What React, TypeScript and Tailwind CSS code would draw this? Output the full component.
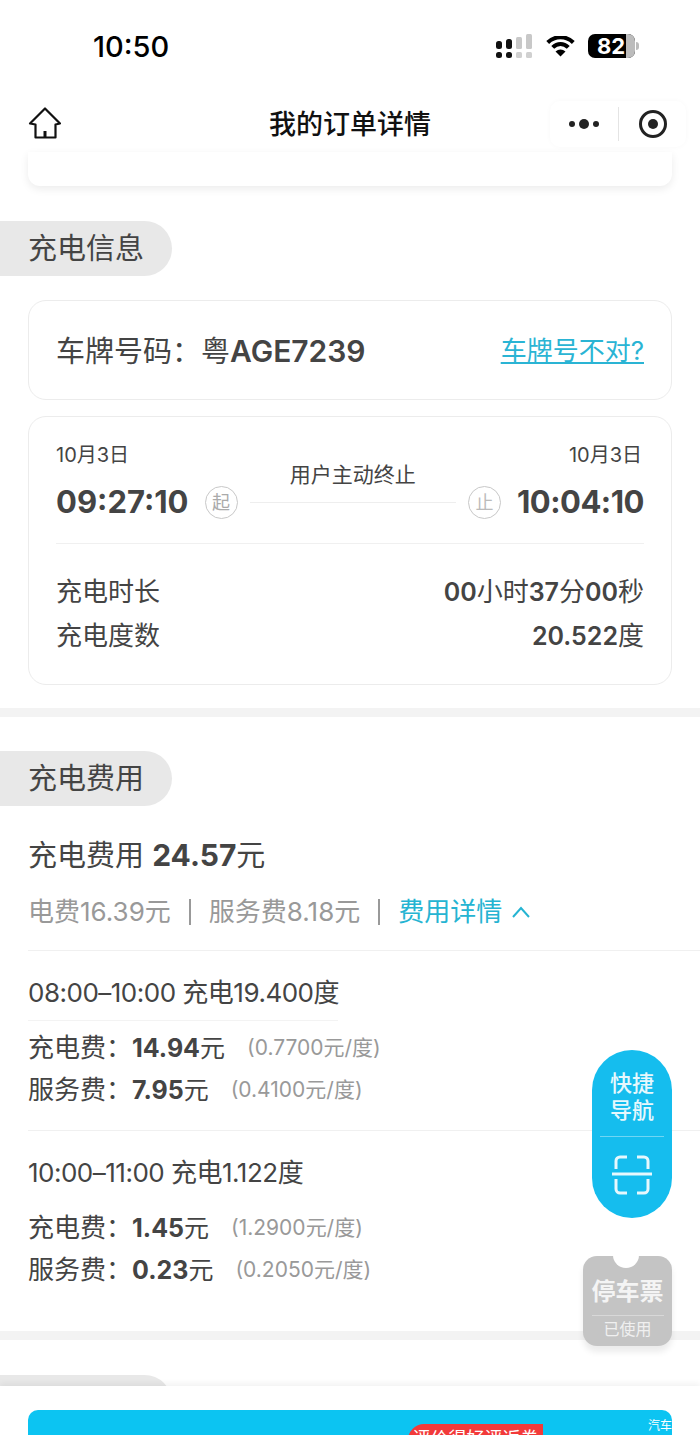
const FONT = '[font-family:Inter,"Noto_Sans_CJK_SC",sans-serif]';

function StatusBar() {
  return (
    <div className="flex h-[94px] items-start justify-between pl-[93px] pr-[61px] pt-[29px]">
      <span className="text-[29px] leading-[36px] font-medium text-black">10:50</span>
      <div className="mt-[5px] flex items-center">
        <svg width="36" height="24" viewBox="0 0 36 24">
          <rect x="0" y="7" width="6" height="8" rx="2.5" fill="#111" />
          <rect x="10" y="5" width="6" height="10" rx="2.5" fill="#111" />
          <rect x="20" y="3" width="6" height="12" rx="1.5" fill="#c8c8c8" />
          <rect x="30" y="0" width="6" height="15" rx="1.5" fill="#c8c8c8" />
          <rect x="0" y="18" width="6" height="6" rx="2.5" fill="#111" />
          <rect x="10" y="18" width="6" height="6" rx="2.5" fill="#111" />
          <rect x="20" y="18" width="6" height="6" rx="1.5" fill="#d0d0d0" />
          <rect x="30" y="18" width="6" height="6" rx="1.5" fill="#d0d0d0" />
        </svg>
        <svg width="31" height="21" viewBox="1 3 30 23" className="ml-[13px]">
          <path d="M2 10C10 2.500 22 2.500 30 10" fill="none" stroke="#000" strokeWidth="4.500" />
          <path d="M7.500 15.500C12.500 10.500 19.500 10.500 24.500 15.500" fill="none" stroke="#000" strokeWidth="4.500" />
          <path d="M16 25.500L10.500 20C14 17 18 17 21.500 20Z" fill="#000" />
        </svg>
        <div className="ml-[12px] flex items-center">
          <div className="relative flex h-[24px] w-[47px] items-center overflow-hidden rounded-[7px] bg-black pl-[9px]">
            <span className="text-[22px] leading-[24px] font-bold text-white">82</span>
            <div className="absolute inset-y-0 right-0 w-[9px] bg-[#bcbcbc]" />
          </div>
          <div className="ml-[1px] h-[8px] w-[3px] rounded-r-full bg-[#bcbcbc]" />
        </div>
      </div>
    </div>
  );
}

function NavBar() {
  return (
    <div className="relative flex h-[58px] items-center justify-center">
      <svg width="34" height="34" viewBox="0 0 34 34" className="absolute left-[28px] top-[12px]">
        <path
          d="M17 2.500L2 17.500L7.500 18.500V31.500H27.500V18.500L32 17.500Z"
          fill="none"
          stroke="#111"
          strokeWidth="2.200"
          strokeLinejoin="round"
        />
        <path d="M17 25V31" stroke="#111" strokeWidth="3" />
      </svg>
      <span className="mt-[4px] text-[27px] leading-[36px] font-medium text-[#111]">我的订单详情</span>
      <div className="absolute right-[14px] top-[7px] flex h-[46px] w-[136px] items-center rounded-[10px] shadow-[0_0_5px_rgba(0,0,0,0.03)]">
        <div className="flex w-[68px] items-center justify-center gap-[4px]">
          <span className="h-[6px] w-[6px] rounded-full bg-[#222]" />
          <span className="h-[10px] w-[10px] rounded-full bg-[#222]" />
          <span className="h-[6px] w-[6px] rounded-full bg-[#222]" />
        </div>
        <div className="h-[34px] w-px bg-[#e4e4e4]" />
        <div className="flex flex-1 items-center justify-center">
          <div className="flex h-[28px] w-[28px] items-center justify-center rounded-full border-[3px] border-[#222]">
            <span className="h-[10px] w-[10px] rounded-full bg-[#222]" />
          </div>
        </div>
      </div>
    </div>
  );
}

function SectionPill({ label }: { label: string }) {
  return (
    <div className="flex h-[55px] w-[172px] items-center rounded-r-full bg-[#e8e8e8] pl-[28px]">
      <span className="text-[29px] leading-[36px] text-[#444]">{label}</span>
    </div>
  );
}

function TimeCard() {
  return (
    <div className="mx-[28px] mt-[16px] h-[269px] rounded-[18px] border border-[#ececec] px-[27px] pt-[24px]">
      <div className="flex justify-between text-[20px] leading-[28px] text-[#444]">
        <span>10月3日</span>
        <span className="mr-[2px]">10月3日</span>
      </div>
      <div className="relative mt-[13px] flex h-[40px] items-center">
        <span className="text-[31px] leading-[40px] font-bold text-[#444]">09:27:10</span>
        <span className="ml-[16px] flex h-[33px] w-[33px] items-center justify-center rounded-full border border-[#c8c8c8] text-[18px] text-[#aaa]">
          起
        </span>
        <div className="relative mx-[12px] h-px flex-1 bg-[#eeeeee]">
          <span className="absolute left-1/2 top-[-41px] -translate-x-1/2 text-[21px] leading-[28px] whitespace-nowrap text-[#444]">
            用户主动终止
          </span>
        </div>
        <span className="mr-[16px] flex h-[33px] w-[33px] items-center justify-center rounded-full border border-[#c8c8c8] text-[18px] text-[#bbb]">
          止
        </span>
        <span className="text-[31px] leading-[40px] font-bold tracking-[-0.5px] text-[#444]">10:04:10</span>
      </div>
      <div className="mt-[21px] h-px bg-[#f0f0f0]" />
      <div className="mt-[30px] flex justify-between text-[26px] leading-[36px] text-[#444]">
        <span>充电时长</span>
        <span>
          <b className="text-[25px] font-semibold">00</b>小时<b className="text-[25px] font-semibold">37</b>分
          <b className="text-[25px] font-semibold">00</b>秒
        </span>
      </div>
      <div className="mt-[8px] flex justify-between text-[26px] leading-[36px] text-[#444]">
        <span>充电度数</span>
        <span>
          <b className="text-[25px] font-semibold">20.522</b>度
        </span>
      </div>
    </div>
  );
}

function FeeBlock({
  range,
  underline,
  rows,
}: {
  range: string;
  underline?: boolean;
  rows: { label: string; amount: string; rate: string; gap: string }[];
}) {
  return (
    <div>
      <div className="text-[26px] leading-[36px] tracking-[-0.5px] text-[#444]">{range}</div>
      <div className={`mt-[9px] h-px w-[310px] ${underline ? "bg-[#f3f3f3]" : "bg-transparent"}`} />
      <div className="mt-[9px] flex flex-col gap-[6px]">
        {rows.map((row) => (
          <div key={row.label} className="flex items-center text-[25px] leading-[36px] text-[#444]">
            <span className="w-[104px] shrink-0 text-[26px] whitespace-nowrap">{row.label}：</span>
            <b className="font-bold">{row.amount}</b>
            <span>元</span>
            <span className={`text-[21px] text-[#999] ${row.gap}`}>({row.rate}元/度)</span>
          </div>
        ))}
      </div>
    </div>
  );
}

function FloatingButtons() {
  return (
    <>
      <div className="absolute left-[592px] top-[1050px] flex h-[168px] w-[80px] flex-col items-center rounded-full bg-[#15bdee] pt-[20px]">
        <span className="w-[44px] text-center text-[22px] leading-[27px] font-medium text-[#e6f8fd]">快捷导航</span>
        <div className="mt-[12px] h-px w-[64px] bg-[#6fd6f4]" />
        <svg width="42" height="40" viewBox="0 0 42 40" className="mt-[18px]" fill="none" stroke="#e6f8fd" strokeWidth="3">
          <path d="M5 14V6a4 4 0 0 1 4-4h7M26 2h7a4 4 0 0 1 4 4v8M5 24v10a4 4 0 0 0 4 4h7M26 38h7a4 4 0 0 0 4-4V24" />
          <path d="M1 19H41" />
        </svg>
      </div>
      <div className="absolute left-[583px] top-[1256px] flex h-[90px] w-[89px] flex-col items-center rounded-[14px] bg-[#c4c4c4] pt-[21px] shadow-[0_6px_6px_rgba(0,0,0,0.08)]">
        <div className="absolute left-[30px] top-[-14px] h-[26px] w-[26px] rounded-full bg-white" />
        <span className="text-[24px] leading-[30px] font-bold whitespace-nowrap text-[#f4f4f4]">停车票</span>
        <div className="mt-[8px] h-px w-[72px] bg-[#d8d8d8]" />
        <span className="mt-[1px] text-[16px] leading-[24px] text-[#f0f0f0]">已使用</span>
      </div>
    </>
  );
}

function BottomBar() {
  return (
    <div className="absolute inset-x-0 top-[1386px] h-[49px] bg-white px-[28px] pt-[24px] shadow-[0_-3px_6px_rgba(0,0,0,0.05)]">
      <div className="relative h-[25px] overflow-hidden rounded-t-[10px] bg-[#0cc4f2]">
        <div className="absolute left-[380px] top-[14px] flex h-[30px] w-[135px] justify-center rounded-tl-[16px] bg-[#f23a3a] pt-[2px] text-[18px] leading-[26px] whitespace-nowrap text-white">
          评价得好评返券
        </div>
        <span className="absolute right-0 top-[8px] text-[12px] leading-[16px] text-white">汽车</span>
      </div>
    </div>
  );
}

export default function App() {
  return (
    <div className={`relative h-[1435px] w-[700px] overflow-hidden bg-white ${FONT}`}>
      <StatusBar />
      <NavBar />
      <div className="mx-[28px] h-[34px] rounded-b-[12px] bg-white shadow-[0_3px_8px_rgba(0,0,0,0.08)]" />

      <div className="mt-[35px]">
        <SectionPill label="充电信息" />
      </div>

      <div className="mx-[28px] mt-[24px] flex h-[100px] items-center justify-between rounded-[18px] border border-[#ececec] px-[27px]">
        <span className="mt-[2px] text-[29px] leading-[36px] text-[#444]">
          车牌号码：粤<span className="text-[30px] font-semibold">AGE7239</span>
        </span>
        <span className="mt-[1px] text-[26px] leading-[34px] text-[#2ab4d4] underline underline-offset-2">车牌号不对?</span>
      </div>

      <TimeCard />

      <div className="mt-[23px] h-[9px] bg-[#f3f3f3]" />

      <div className="mt-[34px]">
        <SectionPill label="充电费用" />
      </div>

      <div className="mt-[30px] pl-[28px] text-[29px] leading-[38px] text-[#444]">
        充电费用 <b className="text-[30px] font-bold">24.57</b>元
      </div>

      <div className="mt-[19px] flex items-center pl-[28px] text-[26px] leading-[36px] text-[#999]">
        <span>电费16.39元</span>
        <div className="mx-[18px] h-[26px] w-[2px] bg-[#999]" />
        <span>服务费8.18元</span>
        <div className="mx-[18px] h-[26px] w-[2px] bg-[#999]" />
        <span className="text-[#25b4d2]">费用详情</span>
        <svg width="20" height="12" viewBox="0 0 20 12" className="ml-[9px]" fill="none" stroke="#25b4d2" strokeWidth="2">
          <path d="M2 11L10 2L18 11" />
        </svg>
      </div>

      <div className="mt-[20px] ml-[28px] h-px bg-[#f0f0f0]" />

      <div className="ml-[28px] mt-[24px]">
        <FeeBlock
          range="08:00–10:00 充电19.400度"
          underline
          rows={[
            { label: "充电费", amount: "14.94", rate: "0.7700", gap: "ml-[22px]" },
            { label: "服务费", amount: "7.95", rate: "0.4100", gap: "ml-[22px]" },
          ]}
        />
      </div>

      <div className="mt-[22px] ml-[28px] h-px bg-[#f0f0f0]" />

      <div className="ml-[28px] mt-[24px]">
        <FeeBlock
          range="10:00–11:00 充电1.122度"
          rows={[
            { label: "充电费", amount: "1.45", rate: "1.2900", gap: "ml-[22px]" },
            { label: "服务费", amount: "0.23", rate: "0.2050", gap: "ml-[22px]" },
          ]}
        />
      </div>

      <div className="mt-[43px] h-[9px] bg-[#f3f3f3]" />

      <div className="mt-[35px]">
        <SectionPill label="" />
      </div>

      <FloatingButtons />
      <BottomBar />
    </div>
  );
}
